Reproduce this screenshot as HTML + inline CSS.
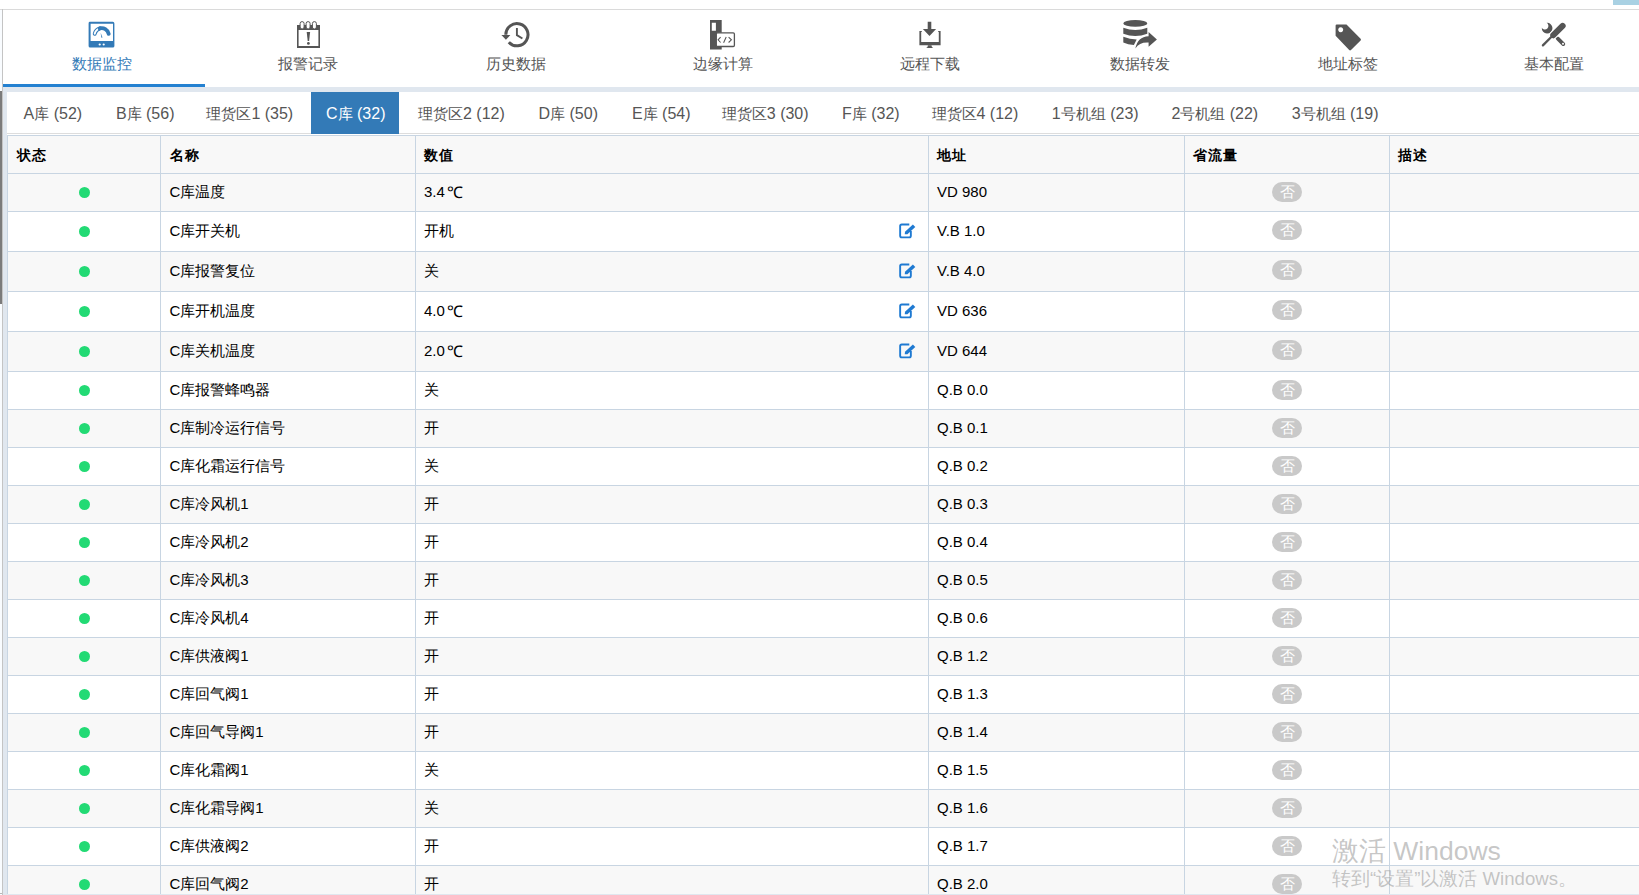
<!DOCTYPE html><html><head><meta charset="utf-8"><style>
*{margin:0;padding:0;box-sizing:border-box}
html,body{width:1639px;height:895px;overflow:hidden;background:#fff;font-family:"Liberation Sans",sans-serif}
.a{position:absolute}
svg{position:absolute}
.nav{position:absolute;top:55px;font-size:15px;color:#555;white-space:nowrap;line-height:17px}
.tab{position:absolute;top:105px;font-size:16px;color:#555;white-space:nowrap;line-height:18px}
.h{position:absolute;top:0;height:1px;background:#c8d5e2}
.v{position:absolute;width:1px;background:#c8d5e2}
.t{position:absolute;font-size:15px;color:#000;white-space:nowrap;line-height:18px}
.th{position:absolute;font-size:14px;color:#000;font-weight:bold;letter-spacing:1px;white-space:nowrap;line-height:18px;top:146px}
.dot{position:absolute;width:11px;height:11px;border-radius:50%;background:#22da74;left:79px}
.badge{position:absolute;left:1272px;width:30px;height:20px;border-radius:10px;background:#c9c9c9;color:#fff;font-size:15px;line-height:19px;text-align:center}
.ed{position:absolute;left:894px}
</style></head><body>
<div class="a" style="left:0;top:9px;width:1639px;height:1px;background:#dadada"></div>
<div class="a" style="left:0;top:10px;width:2px;height:885px;background:#f9fcff"></div>
<div class="a" style="left:2px;top:9px;width:1px;height:886px;background:#c4c4c4"></div>
<div class="a" style="left:0;top:91px;width:2px;height:213px;background:#7b7b7b"></div>
<div class="a" style="left:0;top:893px;width:2px;height:1px;background:#b8b8b8"></div>
<div class="a" style="left:1613px;top:0;width:26px;height:5px;background:#a9d1e3"></div>
<div class="a" style="left:3px;top:84px;width:202px;height:3px;background:#2481d1"></div>
<div class="a" style="left:3px;top:87px;width:1636px;height:5px;background:#e0e7ef"></div>
<div class="a" style="left:3px;top:92px;width:4px;height:803px;background:#e0e7ef"></div>
<div class="a" style="left:7px;top:133px;width:1632px;height:1px;background:#dddddd"></div>
<svg width="36" height="36" viewBox="0 0 36 36" style="left:84px;top:17px"><g fill="#337ab7">
<path d="M5.6 4.8h23.2a1.6 1.6 0 0 1 1.6 1.6v22.6a1.6 1.6 0 0 1-1.6 1.6H6.2a1.6 1.6 0 0 1-1.6-1.6V6.4a1.6 1.6 0 0 1 1-1.6zM6.6 6.8v17.1h22.4V6.8z"/>
<circle cx="15.7" cy="27.5" r="1.1" fill="#fff"/><circle cx="19.7" cy="27.5" r="1.1" fill="#fff"/>
<path d="M10.71 16.81A7.15 7.15 0 0 1 15.97 11.36" fill="none" stroke="#337ab7" stroke-width="3.9" stroke-linecap="round"/>
<path d="M10.71 16.81A7.15 7.15 0 0 1 15.97 11.36" fill="none" stroke="#fff" stroke-width="1.9" stroke-linecap="round"/>
<path d="M15.61 11.46A7.15 7.15 0 0 1 24.69 16.81" fill="none" stroke="#337ab7" stroke-width="3.9" stroke-linecap="round"/>
<path d="M16.6 15.8l1.9 4.7-1.1 0.3z"/>
</g></svg>
<div class="nav" style="left:71.5px;width:60px;color:#337ab7;text-align:center">数据监控</div>
<svg width="36" height="36" viewBox="0 0 36 36" style="left:290px;top:17px"><g fill="#555">
<path d="M7 8h23v23H7zM8.6 13v16h19.8V13z"/>
<rect x="10.1" y="4.6" width="4" height="7.4" rx="2" fill="#fff" stroke="#555" stroke-width="1"/>
<rect x="16.1" y="4.6" width="4" height="7.4" rx="2" fill="#fff" stroke="#555" stroke-width="1"/>
<rect x="22.4" y="4.6" width="4" height="7.4" rx="2" fill="#fff" stroke="#555" stroke-width="1"/>
<path d="M16.7 14.9h3.4l-1 9.2h-1.4z"/><circle cx="18.4" cy="26.4" r="1.4"/>
</g></svg>
<div class="nav" style="left:278.4px;width:60px;color:#555;text-align:center">报警记录</div>
<svg width="36" height="36" viewBox="0 0 36 36" style="left:498px;top:17px">
<path d="M7.8 17.7A11.1 11.1 0 1 1 10.8 25.3" fill="none" stroke="#555" stroke-width="3"/>
<path d="M3.4 18.1h9l-4.5 4.6z" fill="#555"/>
<path d="M18.9 10.9V18.1L24.4 21.5" fill="none" stroke="#555" stroke-width="1.9"/></svg>
<div class="nav" style="left:485.6px;width:60px;color:#555;text-align:center">历史数据</div>
<svg width="36" height="36" viewBox="0 0 36 36" style="left:704px;top:15px"><g fill="#555">
<path d="M6 5h11.7v29.6H6zM7.8 7.8v7.9h4.1V7.8z"/>
<rect x="12.3" y="17.8" width="18.1" height="13.7" rx="1.2" fill="#fff" stroke="#555" stroke-width="1.3"/>
<path d="M16.6 22.2L14.1 24.8L16.6 27.5M24.6 22.2L27.4 24.8L24.6 27.5M22.2 22L19.6 27.8" stroke="#555" stroke-width="1.05" fill="none"/>
</g></svg>
<div class="nav" style="left:692.7px;width:60px;color:#555;text-align:center">边缘计算</div>
<svg width="36" height="36" viewBox="0 0 36 36" style="left:912px;top:17px"><g fill="#555">
<path d="M15.7 4.8h3.6v7.2h4.8l-6.6 7 -6.6 -7h4.8z"/>
<path d="M7.4 13.9h2.4v1.2h-0.6v9.8h17.6v-9.8h-0.6v-1.2h2.4v14.3H7.4z"/>
<path d="M15.9 28.2h3.6l0.4 1.9 1.3 0.9h-7l1.3-0.9z"/>
</g></svg>
<div class="nav" style="left:900.0px;width:60px;color:#555;text-align:center">远程下载</div>
<svg width="44" height="38" viewBox="0 0 44 38" style="left:1118px;top:15px"><g fill="#555">
<ellipse cx="17.3" cy="8.4" rx="12" ry="3.3"/>
<path d="M5.3 12.7q12 4.5 24 0v6q-12 4.5 -24 0z"/>
<path d="M5.3 21.7q6.5 2.6 13.4 2.7l-2.8 5.6q-6 0 -10.6 -2.4z"/>
<path d="M17.4 33.5Q19.5 21.6 30.6 21.2V17L38.9 24.4L30.6 31.8V27.6Q21.5 27 17.4 33.5z"/>
</g></svg>
<div class="nav" style="left:1109.9px;width:60px;color:#555;text-align:center">数据转发</div>
<svg width="36" height="36" viewBox="0 0 36 36" style="left:1330px;top:18px"><g fill="#555">
<path d="M6.8 6.4h9.7l14.1 14.3q0.8 0.9 0 1.8l-9.6 9.6q-0.9 0.8 -1.8 0l-13.6 -14.3V7.6q0 -1.2 1.2 -1.2zM10.7 9.2a2.5 2.5 0 1 0 0.01 0z" fill-rule="evenodd"/>
</g></svg>
<div class="nav" style="left:1318.0px;width:60px;color:#555;text-align:center">地址标签</div>
<svg width="36" height="36" viewBox="0 0 36 36" style="left:1536px;top:17px"><g fill="#555">
<path d="M10.65 5.8A3.55 3.55 0 1 1 5.8 10.65A5.35 5.35 0 1 0 10.65 5.8z"/>
<path d="M21.6 21.4L27.3 27.1" stroke="#555" stroke-width="3.8" stroke-linecap="round"/>
<circle cx="27.0" cy="26.8" r="1" fill="#fff"/>
<path d="M26.6 8.9L17.3 18.2" stroke="#fff" stroke-width="8.2" stroke-linecap="round"/>
<path d="M26.6 8.9L17.3 18.2" stroke="#555" stroke-width="6.1" stroke-linecap="round"/>
<path d="M15.5 19.8L6.9 28.4" stroke="#555" stroke-width="2.3" stroke-linecap="round"/>
</g></svg>
<div class="nav" style="left:1524.1px;width:60px;color:#555;text-align:center">基本配置</div>
<div class="a" style="left:311px;top:92px;width:88px;height:42px;background:#337ab7"></div>
<div class="tab" style="left:23.6px;color:#555">A<span style="font-size:15px">库</span> (52)</div>
<div class="tab" style="left:115.9px;color:#555">B<span style="font-size:15px">库</span> (56)</div>
<div class="tab" style="left:206.4px;color:#555"><span style="font-size:15px">理货区</span>1 (35)</div>
<div class="tab" style="left:326.0px;color:#fff">C<span style="font-size:15px">库</span> (32)</div>
<div class="tab" style="left:418.0px;color:#555"><span style="font-size:15px">理货区</span>2 (12)</div>
<div class="tab" style="left:538.5px;color:#555">D<span style="font-size:15px">库</span> (50)</div>
<div class="tab" style="left:632.0px;color:#555">E<span style="font-size:15px">库</span> (54)</div>
<div class="tab" style="left:721.8px;color:#555"><span style="font-size:15px">理货区</span>3 (30)</div>
<div class="tab" style="left:842.0px;color:#555">F<span style="font-size:15px">库</span> (32)</div>
<div class="tab" style="left:931.5px;color:#555"><span style="font-size:15px">理货区</span>4 (12)</div>
<div class="tab" style="left:1051.8px;color:#555">1<span style="font-size:15px">号机组</span> (23)</div>
<div class="tab" style="left:1171.4px;color:#555">2<span style="font-size:15px">号机组</span> (22)</div>
<div class="tab" style="left:1291.7px;color:#555">3<span style="font-size:15px">号机组</span> (19)</div>
<div class="a" style="left:8px;top:136px;width:1631px;height:37px;background:#f8f8f8"></div>
<div class="a" style="left:8px;top:174px;width:1631px;height:37px;background:#f8f8f8"></div>
<div class="a" style="left:8px;top:252px;width:1631px;height:39px;background:#f8f8f8"></div>
<div class="a" style="left:8px;top:332px;width:1631px;height:39px;background:#f8f8f8"></div>
<div class="a" style="left:8px;top:410px;width:1631px;height:37px;background:#f8f8f8"></div>
<div class="a" style="left:8px;top:486px;width:1631px;height:37px;background:#f8f8f8"></div>
<div class="a" style="left:8px;top:562px;width:1631px;height:37px;background:#f8f8f8"></div>
<div class="a" style="left:8px;top:638px;width:1631px;height:37px;background:#f8f8f8"></div>
<div class="a" style="left:8px;top:714px;width:1631px;height:37px;background:#f8f8f8"></div>
<div class="a" style="left:8px;top:790px;width:1631px;height:37px;background:#f8f8f8"></div>
<div class="a" style="left:8px;top:866px;width:1631px;height:37px;background:#f8f8f8"></div>
<div class="h" style="left:7px;top:135px;width:1632px"></div>
<div class="h" style="left:7px;top:173px;width:1632px"></div>
<div class="h" style="left:7px;top:211px;width:1632px"></div>
<div class="h" style="left:7px;top:251px;width:1632px"></div>
<div class="h" style="left:7px;top:291px;width:1632px"></div>
<div class="h" style="left:7px;top:331px;width:1632px"></div>
<div class="h" style="left:7px;top:371px;width:1632px"></div>
<div class="h" style="left:7px;top:409px;width:1632px"></div>
<div class="h" style="left:7px;top:447px;width:1632px"></div>
<div class="h" style="left:7px;top:485px;width:1632px"></div>
<div class="h" style="left:7px;top:523px;width:1632px"></div>
<div class="h" style="left:7px;top:561px;width:1632px"></div>
<div class="h" style="left:7px;top:599px;width:1632px"></div>
<div class="h" style="left:7px;top:637px;width:1632px"></div>
<div class="h" style="left:7px;top:675px;width:1632px"></div>
<div class="h" style="left:7px;top:713px;width:1632px"></div>
<div class="h" style="left:7px;top:751px;width:1632px"></div>
<div class="h" style="left:7px;top:789px;width:1632px"></div>
<div class="h" style="left:7px;top:827px;width:1632px"></div>
<div class="h" style="left:7px;top:865px;width:1632px"></div>
<div class="h" style="left:7px;top:903px;width:1632px"></div>
<div class="v" style="left:7px;top:135px;height:760px"></div>
<div class="v" style="left:160px;top:135px;height:760px"></div>
<div class="v" style="left:415px;top:135px;height:760px"></div>
<div class="v" style="left:928px;top:135px;height:760px"></div>
<div class="v" style="left:1184px;top:135px;height:760px"></div>
<div class="v" style="left:1389px;top:135px;height:760px"></div>
<div class="th" style="left:16.5px">状态</div>
<div class="th" style="left:169.5px">名称</div>
<div class="th" style="left:424px">数值</div>
<div class="th" style="left:937px">地址</div>
<div class="th" style="left:1193px">省流量</div>
<div class="th" style="left:1397.5px">描述</div>
<div class="dot" style="top:187.0px"></div>
<div class="t" style="left:169.5px;top:183.0px">C库温度</div>
<div class="t" style="left:424px;top:183.0px">3.4<span style="margin-left:2px;font-size:16px;vertical-align:-1px">℃</span></div>
<div class="t" style="left:937px;top:183.0px">VD 980</div>
<div class="badge" style="top:182px">否</div>
<div class="dot" style="top:226.0px"></div>
<div class="t" style="left:169.5px;top:222.0px">C库开关机</div>
<div class="t" style="left:424px;top:222.0px">开机</div>
<div class="t" style="left:937px;top:222.0px">V.B 1.0</div>
<div class="badge" style="top:220px">否</div>
<svg class="ed" width="24" height="24" viewBox="0 0 24 24" style="top:219.5px"><path d="M15.3 4.45H7.75a1.6 1.6 0 0 0-1.6 1.6V15.75a1.6 1.6 0 0 0 1.6 1.6H15.25a1.6 1.6 0 0 0 1.6-1.6V10.9" fill="none" stroke="#1f7ad2" stroke-width="1.9"/><path d="M18.9 4.4L21.3 7.0L13.4 14.24L10.7 14.3L11.0 11.66z" fill="#1f7ad2"/></svg>
<div class="dot" style="top:266.0px"></div>
<div class="t" style="left:169.5px;top:262.0px">C库报警复位</div>
<div class="t" style="left:424px;top:262.0px">关</div>
<div class="t" style="left:937px;top:262.0px">V.B 4.0</div>
<div class="badge" style="top:260px">否</div>
<svg class="ed" width="24" height="24" viewBox="0 0 24 24" style="top:259.5px"><path d="M15.3 4.45H7.75a1.6 1.6 0 0 0-1.6 1.6V15.75a1.6 1.6 0 0 0 1.6 1.6H15.25a1.6 1.6 0 0 0 1.6-1.6V10.9" fill="none" stroke="#1f7ad2" stroke-width="1.9"/><path d="M18.9 4.4L21.3 7.0L13.4 14.24L10.7 14.3L11.0 11.66z" fill="#1f7ad2"/></svg>
<div class="dot" style="top:306.0px"></div>
<div class="t" style="left:169.5px;top:302.0px">C库开机温度</div>
<div class="t" style="left:424px;top:302.0px">4.0<span style="margin-left:2px;font-size:16px;vertical-align:-1px">℃</span></div>
<div class="t" style="left:937px;top:302.0px">VD 636</div>
<div class="badge" style="top:300px">否</div>
<svg class="ed" width="24" height="24" viewBox="0 0 24 24" style="top:299.5px"><path d="M15.3 4.45H7.75a1.6 1.6 0 0 0-1.6 1.6V15.75a1.6 1.6 0 0 0 1.6 1.6H15.25a1.6 1.6 0 0 0 1.6-1.6V10.9" fill="none" stroke="#1f7ad2" stroke-width="1.9"/><path d="M18.9 4.4L21.3 7.0L13.4 14.24L10.7 14.3L11.0 11.66z" fill="#1f7ad2"/></svg>
<div class="dot" style="top:346.0px"></div>
<div class="t" style="left:169.5px;top:342.0px">C库关机温度</div>
<div class="t" style="left:424px;top:342.0px">2.0<span style="margin-left:2px;font-size:16px;vertical-align:-1px">℃</span></div>
<div class="t" style="left:937px;top:342.0px">VD 644</div>
<div class="badge" style="top:340px">否</div>
<svg class="ed" width="24" height="24" viewBox="0 0 24 24" style="top:339.5px"><path d="M15.3 4.45H7.75a1.6 1.6 0 0 0-1.6 1.6V15.75a1.6 1.6 0 0 0 1.6 1.6H15.25a1.6 1.6 0 0 0 1.6-1.6V10.9" fill="none" stroke="#1f7ad2" stroke-width="1.9"/><path d="M18.9 4.4L21.3 7.0L13.4 14.24L10.7 14.3L11.0 11.66z" fill="#1f7ad2"/></svg>
<div class="dot" style="top:385.0px"></div>
<div class="t" style="left:169.5px;top:381.0px">C库报警蜂鸣器</div>
<div class="t" style="left:424px;top:381.0px">关</div>
<div class="t" style="left:937px;top:381.0px">Q.B 0.0</div>
<div class="badge" style="top:380px">否</div>
<div class="dot" style="top:423.0px"></div>
<div class="t" style="left:169.5px;top:419.0px">C库制冷运行信号</div>
<div class="t" style="left:424px;top:419.0px">开</div>
<div class="t" style="left:937px;top:419.0px">Q.B 0.1</div>
<div class="badge" style="top:418px">否</div>
<div class="dot" style="top:461.0px"></div>
<div class="t" style="left:169.5px;top:457.0px">C库化霜运行信号</div>
<div class="t" style="left:424px;top:457.0px">关</div>
<div class="t" style="left:937px;top:457.0px">Q.B 0.2</div>
<div class="badge" style="top:456px">否</div>
<div class="dot" style="top:499.0px"></div>
<div class="t" style="left:169.5px;top:495.0px">C库冷风机1</div>
<div class="t" style="left:424px;top:495.0px">开</div>
<div class="t" style="left:937px;top:495.0px">Q.B 0.3</div>
<div class="badge" style="top:494px">否</div>
<div class="dot" style="top:537.0px"></div>
<div class="t" style="left:169.5px;top:533.0px">C库冷风机2</div>
<div class="t" style="left:424px;top:533.0px">开</div>
<div class="t" style="left:937px;top:533.0px">Q.B 0.4</div>
<div class="badge" style="top:532px">否</div>
<div class="dot" style="top:575.0px"></div>
<div class="t" style="left:169.5px;top:571.0px">C库冷风机3</div>
<div class="t" style="left:424px;top:571.0px">开</div>
<div class="t" style="left:937px;top:571.0px">Q.B 0.5</div>
<div class="badge" style="top:570px">否</div>
<div class="dot" style="top:613.0px"></div>
<div class="t" style="left:169.5px;top:609.0px">C库冷风机4</div>
<div class="t" style="left:424px;top:609.0px">开</div>
<div class="t" style="left:937px;top:609.0px">Q.B 0.6</div>
<div class="badge" style="top:608px">否</div>
<div class="dot" style="top:651.0px"></div>
<div class="t" style="left:169.5px;top:647.0px">C库供液阀1</div>
<div class="t" style="left:424px;top:647.0px">开</div>
<div class="t" style="left:937px;top:647.0px">Q.B 1.2</div>
<div class="badge" style="top:646px">否</div>
<div class="dot" style="top:689.0px"></div>
<div class="t" style="left:169.5px;top:685.0px">C库回气阀1</div>
<div class="t" style="left:424px;top:685.0px">开</div>
<div class="t" style="left:937px;top:685.0px">Q.B 1.3</div>
<div class="badge" style="top:684px">否</div>
<div class="dot" style="top:727.0px"></div>
<div class="t" style="left:169.5px;top:723.0px">C库回气导阀1</div>
<div class="t" style="left:424px;top:723.0px">开</div>
<div class="t" style="left:937px;top:723.0px">Q.B 1.4</div>
<div class="badge" style="top:722px">否</div>
<div class="dot" style="top:765.0px"></div>
<div class="t" style="left:169.5px;top:761.0px">C库化霜阀1</div>
<div class="t" style="left:424px;top:761.0px">关</div>
<div class="t" style="left:937px;top:761.0px">Q.B 1.5</div>
<div class="badge" style="top:760px">否</div>
<div class="dot" style="top:803.0px"></div>
<div class="t" style="left:169.5px;top:799.0px">C库化霜导阀1</div>
<div class="t" style="left:424px;top:799.0px">关</div>
<div class="t" style="left:937px;top:799.0px">Q.B 1.6</div>
<div class="badge" style="top:798px">否</div>
<div class="dot" style="top:841.0px"></div>
<div class="t" style="left:169.5px;top:837.0px">C库供液阀2</div>
<div class="t" style="left:424px;top:837.0px">开</div>
<div class="t" style="left:937px;top:837.0px">Q.B 1.7</div>
<div class="badge" style="top:836px">否</div>
<div class="dot" style="top:879.0px"></div>
<div class="t" style="left:169.5px;top:875.0px">C库回气阀2</div>
<div class="t" style="left:424px;top:875.0px">开</div>
<div class="t" style="left:937px;top:875.0px">Q.B 2.0</div>
<div class="badge" style="top:874px">否</div>
<div class="a" style="left:3px;top:894px;width:1636px;height:1px;background:#e0e7ef"></div>
<div class="a" style="left:1332px;top:835.5px;font-size:26.5px;color:rgba(150,150,150,0.55);white-space:nowrap;line-height:30px">激活 Windows</div>
<div class="a" style="left:1332px;top:867.5px;font-size:18.6px;color:rgba(150,150,150,0.55);white-space:nowrap;line-height:22px">转到“设置”以激活 Windows。</div>
</body></html>
